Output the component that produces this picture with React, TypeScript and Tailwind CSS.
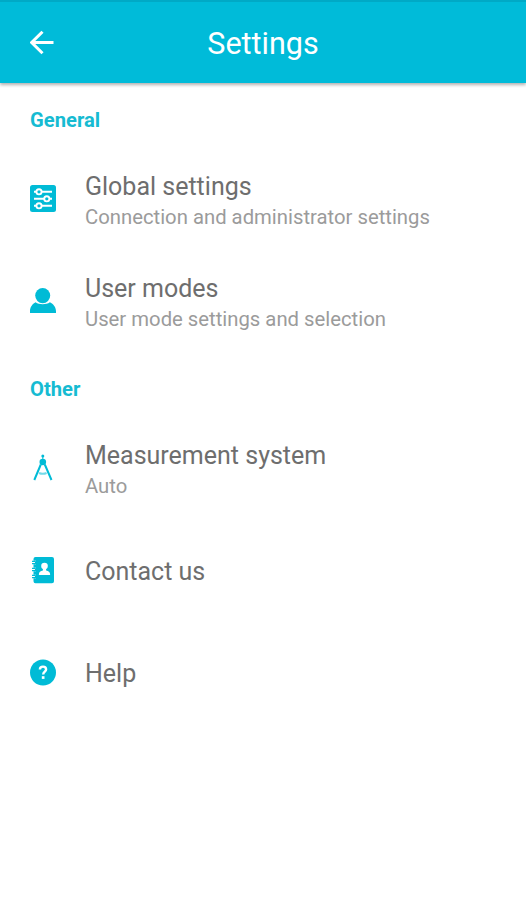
import type { ReactNode } from 'react'

interface SettingsItemProps {
  icon: ReactNode
  title: string
  subtitle?: string
}

const TuneIcon = () => (
  <svg viewBox="0 0 26 27" className="w-[26px] h-[27px]" fill="none">
    <rect width="26" height="27" rx="2.5" fill="#00bbd6" />
    <g stroke="#fff" strokeWidth="1.9">
      <path d="M4 6.8h2.3M11.7 6.8H22" />
      <path d="M4 13.8h10M19.5 13.8H22" />
      <path d="M4 20.8h2.3M11.7 20.8H22" />
      <circle cx="9" cy="6.8" r="2.6" />
      <circle cx="16.8" cy="13.8" r="2.6" />
      <circle cx="9" cy="20.8" r="2.6" />
    </g>
  </svg>
)

const UserIcon = () => (
  <svg viewBox="0 0 26 27" className="w-[26px] h-[27px]" fill="#00bbd6">
    <ellipse cx="12.7" cy="8.6" rx="7.5" ry="7.7" />
    <path d="M0 26v-1.7c0-4 2.3-7.2 5.6-9 1.9 1.4 4.3 1.9 7.1 1.9s5.3-.5 7.2-1.9c3.5 1.8 6.1 5 6.1 9V26z" />
  </svg>
)

const CompassIcon = () => (
  <svg viewBox="0 0 26 27" className="w-[26px] h-[27px]" fill="none" stroke="#00bbd6">
    <circle cx="12.8" cy="2" r="1.5" fill="#00bbd6" stroke="none" />
    <circle cx="12.8" cy="8" r="3.3" fill="#00bbd6" stroke="none" />
    <path d="M12.8 2v4" strokeWidth="1" />
    <path d="M10.8 10.5L4.3 26M14.8 10.5L21.5 26" strokeWidth="2" />
    <path d="M9 19q3.8 1.6 7.600 0" strokeWidth="2" opacity="0.55" />
  </svg>
)

const ContactIcon = () => (
  <svg viewBox="0 0 26 27" className="mt-0.5 w-[26px] h-[27px]" fill="#00bbd6">
    <path d="M5.5 0H22a2 2 0 0 1 2 2v22.2a2 2 0 0 1-2 2H5.5a2 2 0 0 1-2-2V2a2 2 0 0 1 2-2z" />
    <path d="M2 5.500h4M2 12.500h4M2 19.500h4" stroke="#fff" strokeWidth="3.6" />
    <g fill="none" stroke="#00bbd6" strokeWidth="1.3">
      <path d="M2 4.300h2.500a1.200 1.200 0 0 1 0 2.400H2" />
      <path d="M2 11.300h2.500a1.200 1.200 0 0 1 0 2.400H2" />
      <path d="M2 18.300h2.500a1.200 1.200 0 0 1 0 2.400H2" />
    </g>
    <circle cx="14.5" cy="9" r="3.3" fill="#fff" />
    <path d="M12.9 11h3.2v2.6c2.4.4 4 1.6 4 3.6v.8H8.900v-.8c0-2 1.600-3.200 4-3.600z" fill="#fff" />
  </svg>
)

const HelpIcon = () => (
  <svg viewBox="0 0 26 27" className="mt-0.5 w-[26px] h-[27px]" fill="none">
    <circle cx="13" cy="13.5" r="13" fill="#00bbd6" />
    <path d="M9.9 10.6c0-1.9 1.3-3 3.1-3s3.1 1.1 3.1 2.8c0 2.2-2.9 2.4-2.9 5.2" stroke="#fff" strokeWidth="2.4" />
    <rect x="11.8" y="17.2" width="2.7" height="2.7" fill="#fff" />
  </svg>
)

const SectionTitle = ({ children }: { children: string }) => (
  <h2 className="h-[67px] pl-[30px] pt-2 flex items-center text-[20.2px] font-bold text-[#16bbd2]">{children}</h2>
)

const SettingsItem = ({ icon, title, subtitle }: SettingsItemProps) => (
  <li className="h-[102px] pl-[30px] flex items-center">
    <div className="w-[55px] pb-1.5 shrink-0">{icon}</div>
    <div className="pt-0.5">
      <p className="last:mb-0.5 text-[25px] leading-[30px] text-[#6e6e6e]">{title}</p>
      {subtitle && <p className="text-[20.3px] leading-[30px] text-[#9b9b9b]">{subtitle}</p>}
    </div>
  </li>
)

export default function App() {
  return (
    <div className="h-[900px] bg-white font-['Roboto',sans-serif]">
      <header className="h-[83px] px-[30px] grid grid-cols-[26px_1fr_26px] items-center bg-[#00bbd9] border-t-2 border-[#00a9c6] shadow-[0_2px_3px_rgba(0,0,0,0.3)]">
        <svg viewBox="0 0 26 26" className="w-[26px] h-[26px]" fill="none" stroke="#fff" strokeWidth="3">
          <path d="M23.5 12.5H2M12.5 1.7L1.7 12.5l10.8 10.8" />
        </svg>
        <h1 className="pt-0.5 text-center text-[30.5px] leading-[36px] text-white">Settings</h1>
      </header>
      <main>
        <SectionTitle>General</SectionTitle>
        <ul className="-mb-0.5">
          <SettingsItem icon={<TuneIcon />} title="Global settings" subtitle="Connection and administrator settings" />
          <SettingsItem icon={<UserIcon />} title="User modes" subtitle="User mode settings and selection" />
        </ul>
        <SectionTitle>Other</SectionTitle>
        <ul>
          <SettingsItem icon={<CompassIcon />} title="Measurement system" subtitle="Auto" />
          <SettingsItem icon={<ContactIcon />} title="Contact us" />
          <SettingsItem icon={<HelpIcon />} title="Help" />
        </ul>
      </main>
    </div>
  )
}
